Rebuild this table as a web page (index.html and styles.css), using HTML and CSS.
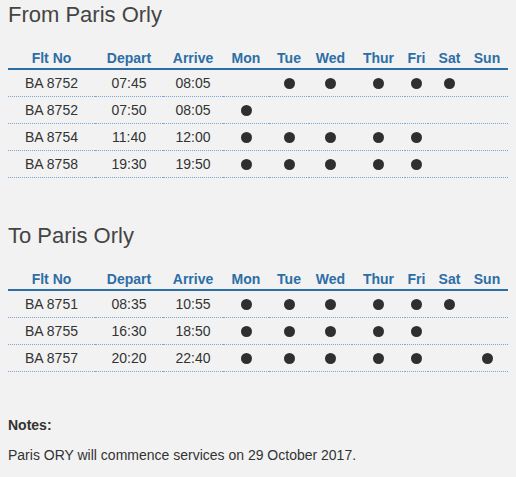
FILE: index.html
```html
<!DOCTYPE html>
<html lang="en">
<head>
<meta charset="utf-8">
<title>Paris Orly timetable</title>
<link rel="stylesheet" href="styles.css">
</head>
<body>
<div class="page">
  <section class="route">
    <h2 class="route-title">From Paris Orly</h2>
    <table class="timetable">
      <colgroup>
        <col class="c-flt"><col class="c-dep"><col class="c-arr"><col class="c-mon"><col class="c-tue"><col class="c-wed"><col class="c-thu"><col class="c-fri"><col class="c-sat"><col class="c-sun">
      </colgroup>
      <thead>
        <tr><th>Flt No</th><th>Depart</th><th>Arrive</th><th>Mon</th><th>Tue</th><th>Wed</th><th>Thur</th><th>Fri</th><th>Sat</th><th>Sun</th></tr>
      </thead>
      <tbody>
        <tr><td>BA 8752</td><td>07:45</td><td>08:05</td><td></td><td><span class="dot"></span></td><td><span class="dot"></span></td><td><span class="dot"></span></td><td><span class="dot"></span></td><td><span class="dot"></span></td><td></td></tr>
        <tr><td>BA 8752</td><td>07:50</td><td>08:05</td><td><span class="dot"></span></td><td></td><td></td><td></td><td></td><td></td><td></td></tr>
        <tr><td>BA 8754</td><td>11:40</td><td>12:00</td><td><span class="dot"></span></td><td><span class="dot"></span></td><td><span class="dot"></span></td><td><span class="dot"></span></td><td><span class="dot"></span></td><td></td><td></td></tr>
        <tr><td>BA 8758</td><td>19:30</td><td>19:50</td><td><span class="dot"></span></td><td><span class="dot"></span></td><td><span class="dot"></span></td><td><span class="dot"></span></td><td><span class="dot"></span></td><td></td><td></td></tr>
      </tbody>
    </table>
  </section>

  <section class="route">
    <h2 class="route-title">To Paris Orly</h2>
    <table class="timetable">
      <colgroup>
        <col class="c-flt"><col class="c-dep"><col class="c-arr"><col class="c-mon"><col class="c-tue"><col class="c-wed"><col class="c-thu"><col class="c-fri"><col class="c-sat"><col class="c-sun">
      </colgroup>
      <thead>
        <tr><th>Flt No</th><th>Depart</th><th>Arrive</th><th>Mon</th><th>Tue</th><th>Wed</th><th>Thur</th><th>Fri</th><th>Sat</th><th>Sun</th></tr>
      </thead>
      <tbody>
        <tr><td>BA 8751</td><td>08:35</td><td>10:55</td><td><span class="dot"></span></td><td><span class="dot"></span></td><td><span class="dot"></span></td><td><span class="dot"></span></td><td><span class="dot"></span></td><td><span class="dot"></span></td><td></td></tr>
        <tr><td>BA 8755</td><td>16:30</td><td>18:50</td><td><span class="dot"></span></td><td><span class="dot"></span></td><td><span class="dot"></span></td><td><span class="dot"></span></td><td><span class="dot"></span></td><td></td><td></td></tr>
        <tr><td>BA 8757</td><td>20:20</td><td>22:40</td><td><span class="dot"></span></td><td><span class="dot"></span></td><td><span class="dot"></span></td><td><span class="dot"></span></td><td><span class="dot"></span></td><td></td><td><span class="dot"></span></td></tr>
      </tbody>
    </table>
  </section>

  <div class="notes">
    <p class="notes-title">Notes:</p>
    <p class="notes-text">Paris ORY will commence services on 29 October 2017.</p>
  </div>
</div>
</body>
</html>
```

FILE: styles.css
```css
html, body {
  margin: 0;
  padding: 0;
  background: #f2f2f2;
}

body {
  font-family: "Liberation Sans", Arial, sans-serif;
  font-size: 14px;
  color: #333333;
}

.page {
  padding: 2px 8px 0 8px;
}

.route + .route {
  margin-top: 45px;
}

.route-title {
  margin: 0 0 16px 0;
  font-size: 22px;
  line-height: 26px;
  font-weight: normal;
  color: #444444;
}

.timetable {
  width: 500px;
  border-collapse: collapse;
  table-layout: fixed;
}

.c-flt { width: 87px; }
.c-dep { width: 68px; }
.c-arr { width: 60px; }
.c-mon { width: 46px; }
.c-tue { width: 40px; }
.c-wed { width: 43px; }
.c-thu { width: 53px; }
.c-fri { width: 23px; }
.c-sat { width: 43px; }
.c-sun { width: 37px; }

.timetable th {
  padding: 6px 0 2px 0;
  line-height: 16px;
  font-weight: bold;
  color: #2c6ea6;
  text-align: center;
  border-bottom: 2px solid #2c6ea6;
  white-space: nowrap;
}

.timetable td {
  padding: 5px 0;
  line-height: 16px;
  height: 16px;
  text-align: center;
  border-bottom: 1px dotted #7aa7cf;
  white-space: nowrap;
}

.timetable th:last-child,
.timetable td:last-child {
  padding-right: 5px;
}

.dot {
  display: inline-block;
  width: 11px;
  height: 11px;
  border-radius: 50%;
  background: #2f2f2f;
  vertical-align: -1px;
}

.notes {
  margin-top: 45px;
}

.notes p {
  margin: 0;
  line-height: 16px;
}

.notes-title {
  font-weight: bold;
  margin-bottom: 14px !important;
}
```
